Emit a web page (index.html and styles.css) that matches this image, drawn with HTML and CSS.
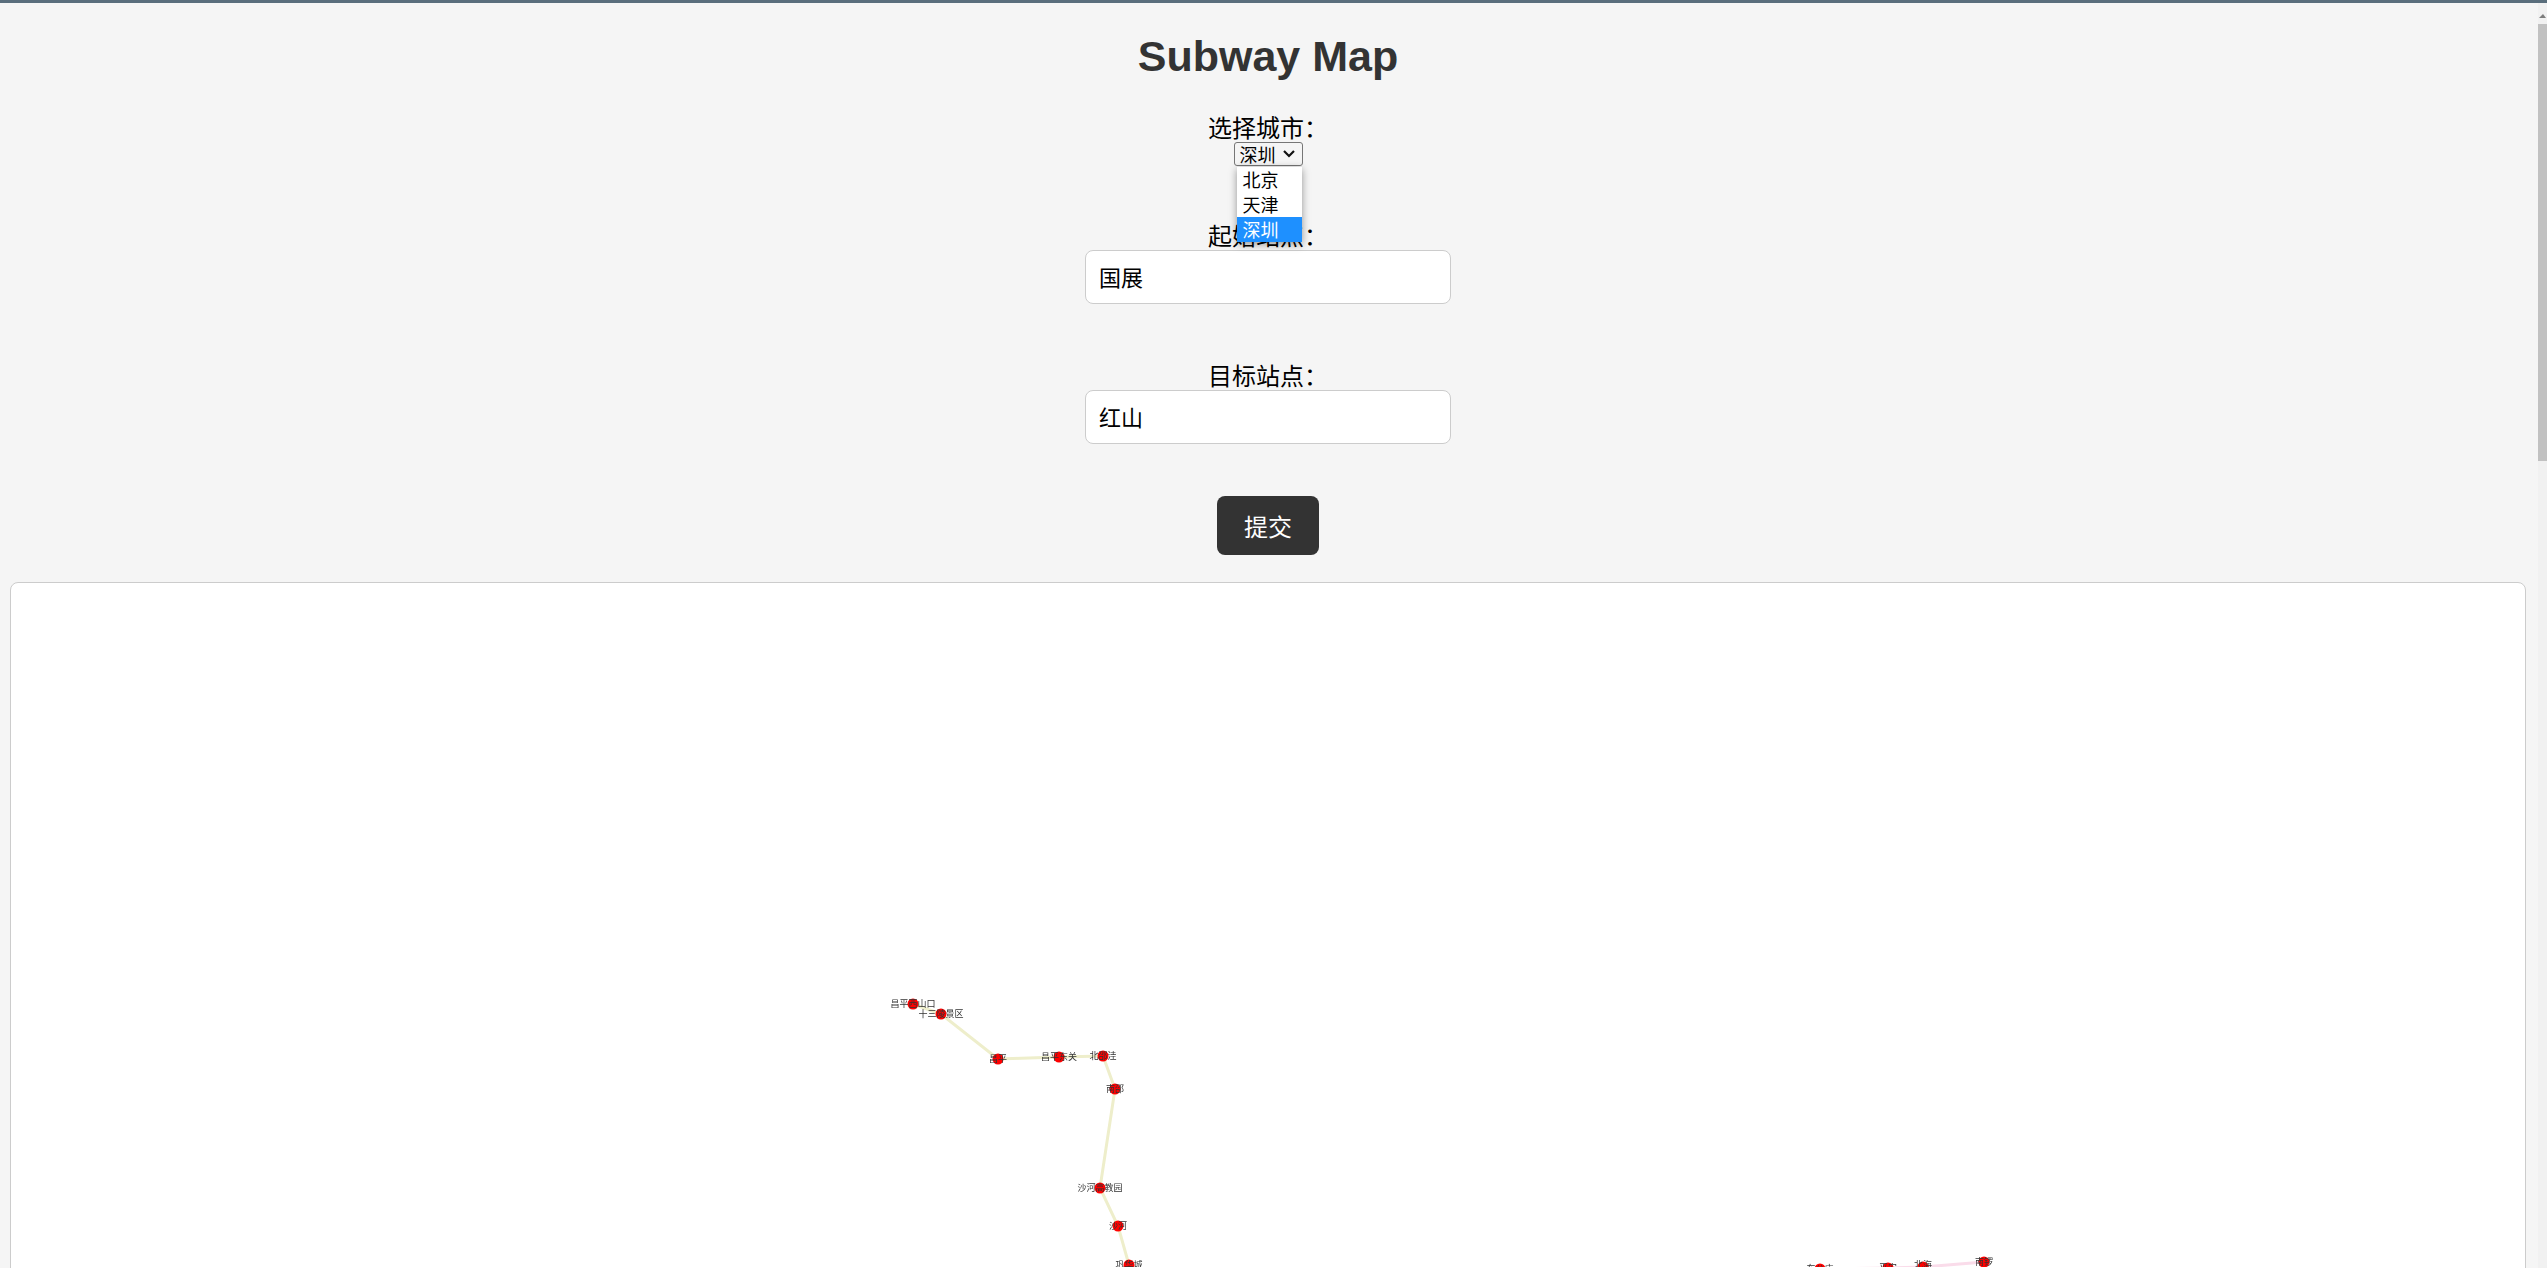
FILE: index.html
```html
<!DOCTYPE html>
<html lang="zh-CN">
<head>
<meta charset="utf-8">
<title>Subway Map</title>
<link rel="stylesheet" href="styles.css">
</head>
<body>
<div class="page">
  <main class="main">
    <h1 class="title">Subway Map</h1>
    <form class="form">
      <div class="field field-city">
        <label class="label">选择城市：</label>
        <div class="select-wrap">
          <div class="select">
            <span>深圳</span>
            <svg class="chevron" width="14" height="10" viewBox="0 0 14 10"><path d="M2 2 7 7 12 2" fill="none" stroke="#111" stroke-width="2.2"/></svg>
          </div>
          <ul class="popup">
            <li class="option">北京</li>
            <li class="option">天津</li>
            <li class="option option-active">深圳</li>
          </ul>
        </div>
      </div>
      <div class="field field-start">
        <label class="label">起始站点：</label>
        <div class="input">国展</div>
      </div>
      <div class="field field-end">
        <label class="label">目标站点：</label>
        <div class="input">红山</div>
      </div>
      <button class="submit" type="button">提交</button>
    </form>
    <section class="map">
      <svg class="map-svg" width="2514" height="684" viewBox="11 583 2514 684">
        <g class="lines">
          <polyline class="line-green" points="913,1004 941,1014 998,1059 1059,1057 1103,1056 1115,1089 1100,1188 1118,1226 1129,1265"/>
          <polyline class="line-pink" points="1820,1269 1888,1268 1923,1267 1984,1262"/>
        </g>
        <g class="nodes">
          <circle cx="913" cy="1004" r="5.500"/><circle cx="941" cy="1014" r="5.500"/>
          <circle cx="998" cy="1059" r="5.500"/><circle cx="1059" cy="1057" r="5.500"/>
          <circle cx="1103" cy="1056" r="5.500"/><circle cx="1115" cy="1089" r="5.500"/>
          <circle cx="1100" cy="1188" r="5.500"/><circle cx="1118" cy="1226" r="5.500"/>
          <circle cx="1129" cy="1265" r="5.500"/><circle cx="1820" cy="1269" r="5.500"/>
          <circle cx="1888" cy="1268" r="5.500"/><circle cx="1923" cy="1267" r="5.500"/>
          <circle cx="1984" cy="1262" r="5.500"/>
        </g>
        <g class="names">
          <text x="913" y="1007">昌平西山口</text>
          <text x="941" y="1017">十三陵景区</text>
          <text x="998" y="1062">昌平</text>
          <text x="1059" y="1060">昌平东关</text>
          <text x="1103" y="1059">北邵洼</text>
          <text x="1115" y="1092">南邵</text>
          <text x="1100" y="1191">沙河高教园</text>
          <text x="1118" y="1229">沙河</text>
          <text x="1129" y="1268">巩华城</text>
          <text x="1820" y="1272">车公庄</text>
          <text x="1888" y="1271">平安</text>
          <text x="1923" y="1268">北海</text>
          <text x="1984" y="1265">南锣</text>
        </g>
      </svg>
    </section>
  </main>
  <aside class="scrollbar">
    <svg class="scroll-arrow" width="9" height="21" viewBox="0 0 9 21"><path d="M1 15 5 11 8 15Z" fill="#7d7d7d"/></svg>
    <div class="scroll-thumb"></div>
  </aside>
</div>
</body>
</html>
```
FILE: styles.css
```css
* { box-sizing: border-box; }
html, body { margin: 0; height: 100%; overflow: hidden; }
body {
  background: #f5f5f5;
  font-family: "Liberation Sans", "Noto Sans CJK SC", sans-serif;
  color: #000;
}
.page {
  display: flex;
  height: 1268px;
  border-top: 3px solid #5a6e7c;
}
.main { flex: 1; min-width: 0; display: flex; flex-direction: column; overflow: hidden; padding-right: 2px; }
.title {
  margin: 0;
  padding-top: 28px;
  height: 104px;
  text-align: center;
  font-size: 43px;
  line-height: 50px;
  font-weight: 700;
  color: #333;
}
.form { display: flex; flex-direction: column; align-items: center; }
.field { display: flex; flex-direction: column; align-items: center; }
.label {
  font-size: 24px;
  line-height: 30px;
  font-family: "Noto Sans CJK SC", "Liberation Sans", sans-serif;
}
.field-city { height: 108px; margin-top: 31px; }
.field-start { height: 140px; }
.field-end { height: 136px; }
.select-wrap { position: relative; }
.select {
  width: 69px;
  height: 24px;
  display: flex;
  align-items: center;
  gap: 6px;
  padding-left: 5px;
  background: #f5f5f5;
  border: 1px solid #767676;
  border-radius: 3px;
  font-size: 18px;
  line-height: 22px;
  font-family: "Noto Sans CJK SC", sans-serif;
}
.popup {
  position: absolute;
  z-index: 2;
  top: 25px;
  left: 3px;
  width: 65px;
  margin: 0;
  padding: 0;
  list-style: none;
  background: #fff;
  box-shadow: 0 2px 8px rgba(0, 0, 0, .4);
  font-size: 18px;
  font-family: "Noto Sans CJK SC", sans-serif;
}
.option { height: 25px; line-height: 24px; padding-left: 6px; }
.option-active { background: #1e90ff; color: #fff; }
.input {
  width: 366px;
  height: 54px;
  padding: 0 13px;
  background: #fff;
  border: 1.5px solid #ccc;
  border-radius: 8px;
  font-size: 22px;
  line-height: 51px;
  font-family: "Noto Sans CJK SC", sans-serif;
}
.submit {
  width: 102px;
  height: 59px;
  padding: 0;
  background: #333;
  color: #fff;
  border: 0;
  border-radius: 8px;
  font-size: 24px;
  font-family: "Noto Sans CJK SC", sans-serif;
}
.map {
  margin: 27px 10px 0 10px;
  height: 700px;
  background: #fff;
  border: 1px solid #ccc;
  border-radius: 8px;
  overflow: hidden;
  flex: none;
}
.map-svg { display: block; filter: blur(0.35px); }
.line-green, .line-pink { fill: none; stroke-width: 3; }
.line-green { stroke: #eeeecb; }
.line-pink { stroke: #fadcea; }
.nodes circle { fill: #f00; }
.names text {
  font-family: "Noto Sans CJK SC", sans-serif;
  font-size: 9px;
  text-anchor: middle;
  fill: #333;
}
.scrollbar {
  position: relative;
  width: 9px;
  flex: none;
  background: #f1f1f1;
}
.scroll-arrow { display: block; }
.scroll-thumb { height: 437px; background: #c1c1c1; }
```
